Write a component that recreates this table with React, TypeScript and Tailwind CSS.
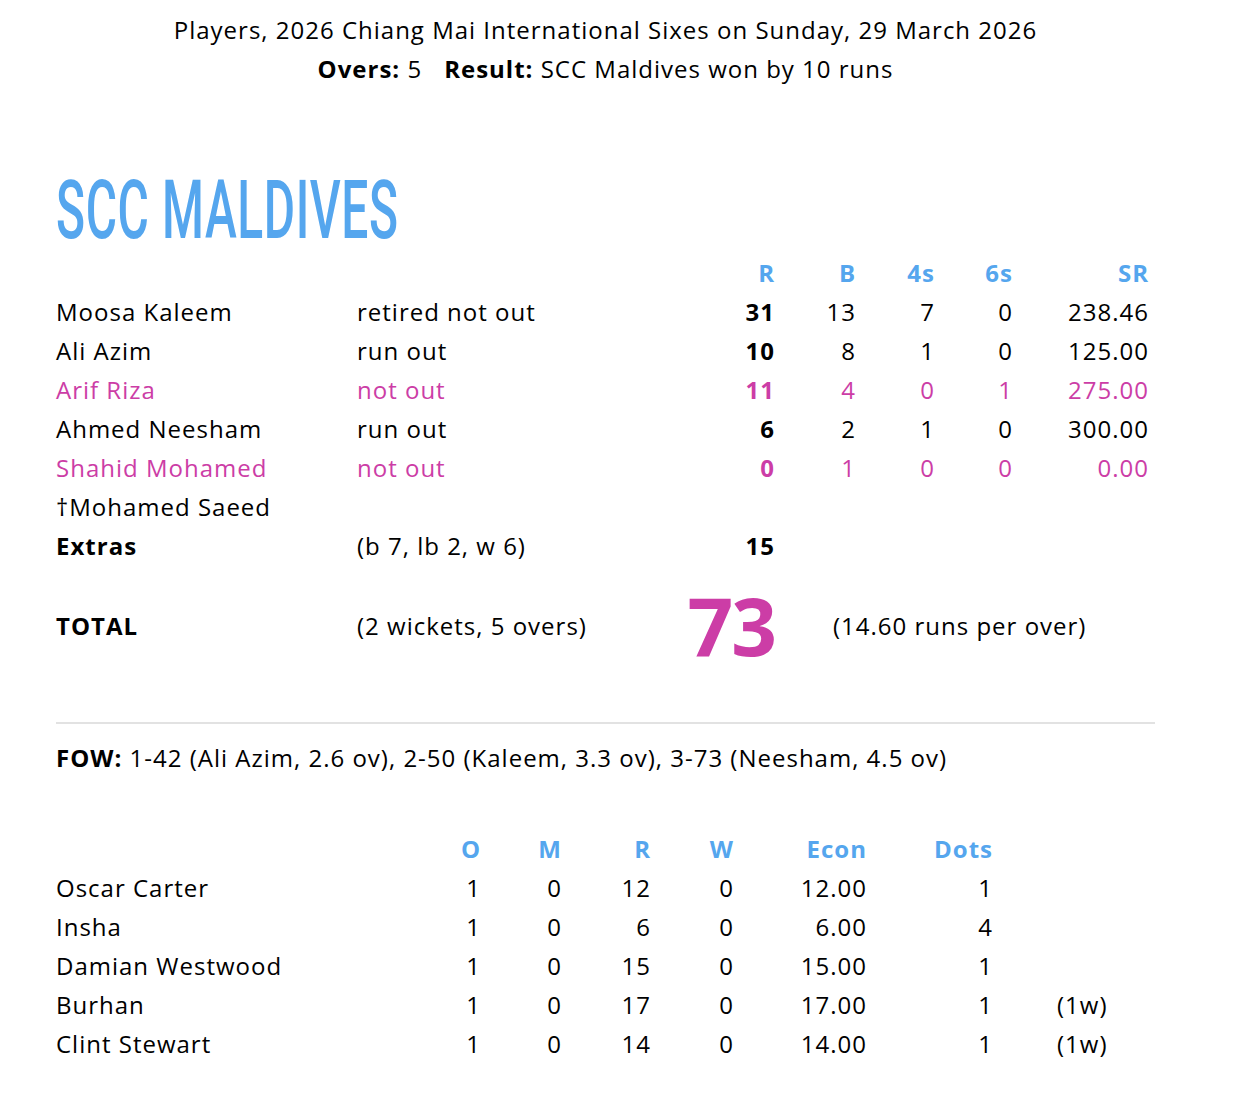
import React from "react";

const BLUE = "text-[#55a6ee]";
const PINK = "text-[#cc3da6]";

type Bat = {
  name: string;
  how: string;
  r?: string;
  b?: string;
  fours?: string;
  sixes?: string;
  sr?: string;
  notOut?: boolean;
};

const batting: Bat[] = [
  { name: "Moosa Kaleem", how: "retired not out", r: "31", b: "13", fours: "7", sixes: "0", sr: "238.46" },
  { name: "Ali Azim", how: "run out", r: "10", b: "8", fours: "1", sixes: "0", sr: "125.00" },
  { name: "Arif Riza", how: "not out", r: "11", b: "4", fours: "0", sixes: "1", sr: "275.00", notOut: true },
  { name: "Ahmed Neesham", how: "run out", r: "6", b: "2", fours: "1", sixes: "0", sr: "300.00" },
  { name: "Shahid Mohamed", how: "not out", r: "0", b: "1", fours: "0", sixes: "0", sr: "0.00", notOut: true },
  { name: "\u2020Mohamed Saeed", how: "" },
];

const bowling = [
  { name: "Oscar Carter", o: "1", m: "0", r: "12", w: "0", econ: "12.00", dots: "1", extra: "" },
  { name: "Insha", o: "1", m: "0", r: "6", w: "0", econ: "6.00", dots: "4", extra: "" },
  { name: "Damian Westwood", o: "1", m: "0", r: "15", w: "0", econ: "15.00", dots: "1", extra: "" },
  { name: "Burhan", o: "1", m: "0", r: "17", w: "0", econ: "17.00", dots: "1", extra: "(1w)" },
  { name: "Clint Stewart", o: "1", m: "0", r: "14", w: "0", econ: "14.00", dots: "1", extra: "(1w)" },
];

// column widths measured off the scorecard
const batCols = "grid grid-cols-[301px_337px_81px_81px_79px_78px_136px]";
const bowlCols = "grid grid-cols-[345px_80px_81px_89px_83px_133px_126px_1fr]";

export default function App() {
  return (
    <div className="min-h-screen bg-white font-['Open_Sans',sans-serif] text-[24px] leading-[39px] tracking-[1px] text-black">
      <div className="w-[1099px] ml-[56px] pt-[10px] pb-[40px]">
        {/* match header */}
        <div className="text-center">
          <div>Players, 2026 Chiang Mai International Sixes on Sunday, 29 March 2026</div>
          <div>
            <b>Overs:</b> 5<b className="ml-[22px]">Result:</b> SCC Maldives won by 10 runs
          </div>
        </div>

        {/* team name */}
        <div className="mt-[82px] h-[81px] overflow-visible">
          <span
            className={`inline-block origin-left scale-x-[0.592] whitespace-nowrap font-['Roboto',sans-serif] text-[81px] leading-none font-medium tracking-[1px] ${BLUE}`}
          >
            SCC MALDIVES
          </span>
        </div>

        {/* batting */}
        <div className={`${batCols} mt-[2px] font-bold ${BLUE}`}>
          <div />
          <div />
          <div className="text-right">R</div>
          <div className="text-right">B</div>
          <div className="text-right">4s</div>
          <div className="text-right">6s</div>
          <div className="text-right">SR</div>
        </div>
        {batting.map((p) => (
          <div key={p.name} className={`${batCols} ${p.notOut ? PINK : ""}`}>
            <div>{p.name}</div>
            <div>{p.how}</div>
            <div className="text-right font-bold">{p.r}</div>
            <div className="text-right">{p.b}</div>
            <div className="text-right">{p.fours}</div>
            <div className="text-right">{p.sixes}</div>
            <div className="text-right">{p.sr}</div>
          </div>
        ))}
        <div className={batCols}>
          <div className="font-bold">Extras</div>
          <div>(b 7, lb 2, w 6)</div>
          <div className="text-right font-bold">15</div>
        </div>

        {/* total */}
        <div className={`${batCols} mt-[20px] h-[80px] items-center`}>
          <div className="font-bold">TOTAL</div>
          <div>(2 wickets, 5 overs)</div>
          <div className="flex justify-end">
            <span className={`whitespace-nowrap text-[80px] leading-[80px] font-bold tracking-[-2px] ${PINK}`}>73</span>
          </div>
          <div className="col-span-4 pl-[58px] whitespace-nowrap">(14.60 runs per over)</div>
        </div>

        <div className="mt-[57px] h-[2px] bg-[#e2e2e2]" />

        <div className="mt-[14px]">
          <b>FOW:</b> 1-42 (Ali Azim, 2.6 ov), 2-50 (Kaleem, 3.3 ov), 3-73 (Neesham, 4.5 ov)
        </div>

        {/* bowling */}
        <div className={`${bowlCols} mt-[52px] font-bold ${BLUE}`}>
          <div />
          <div className="text-right">O</div>
          <div className="text-right">M</div>
          <div className="text-right">R</div>
          <div className="text-right">W</div>
          <div className="text-right">Econ</div>
          <div className="text-right">Dots</div>
          <div />
        </div>
        {bowling.map((b) => (
          <div key={b.name} className={bowlCols}>
            <div>{b.name}</div>
            <div className="text-right">{b.o}</div>
            <div className="text-right">{b.m}</div>
            <div className="text-right">{b.r}</div>
            <div className="text-right">{b.w}</div>
            <div className="text-right">{b.econ}</div>
            <div className="text-right">{b.dots}</div>
            <div className="pl-[64px]">{b.extra}</div>
          </div>
        ))}
      </div>
    </div>
  );
}
